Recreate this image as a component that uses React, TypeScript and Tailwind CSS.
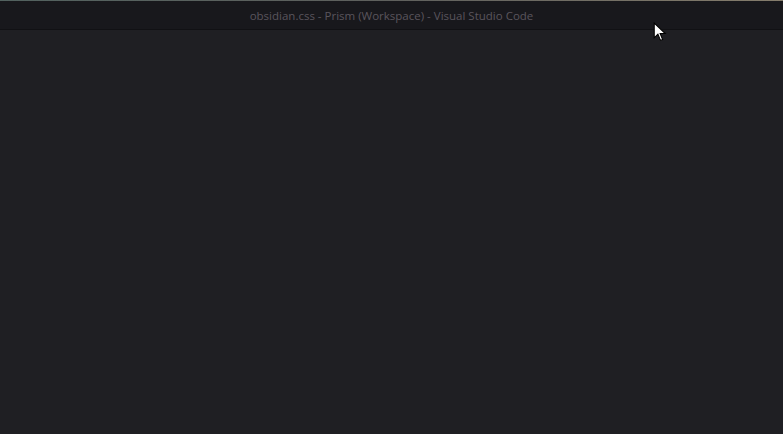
export default function App() {
  return (
    <div className="relative flex h-[434px] w-[783px] flex-col overflow-hidden bg-[#1f1f23] font-['Segoe_UI','Open_Sans','Liberation_Sans',sans-serif]">
      <div className="h-px w-full bg-gradient-to-r from-[#52625f] via-[#5f605d] to-[#857d6c]" />
      <div className="flex h-[28px] items-center justify-center bg-[#18181c] pt-[1px] text-[11.5px] text-[#5a555c]">
        <span>obsidian.css - Prism (Workspace) - Visual Studio Code</span>
      </div>
      <div className="h-px w-full bg-[#111114]" />
      <div className="flex-1" />

      {/* mouse pointer */}
      <svg
        className="absolute left-[653px] top-[22px]"
        width="14"
        height="21"
        viewBox="0 0 13 20"
      >
        <path
          d="M1 1 L1 15 L4.5 11.5 L7 17.5 L9 16.6 L6.6 11 L11.5 11 Z"
          fill="#ffffff"
          stroke="#000000"
          strokeWidth="1"
          strokeLinejoin="miter"
        />
      </svg>
    </div>
  );
}
